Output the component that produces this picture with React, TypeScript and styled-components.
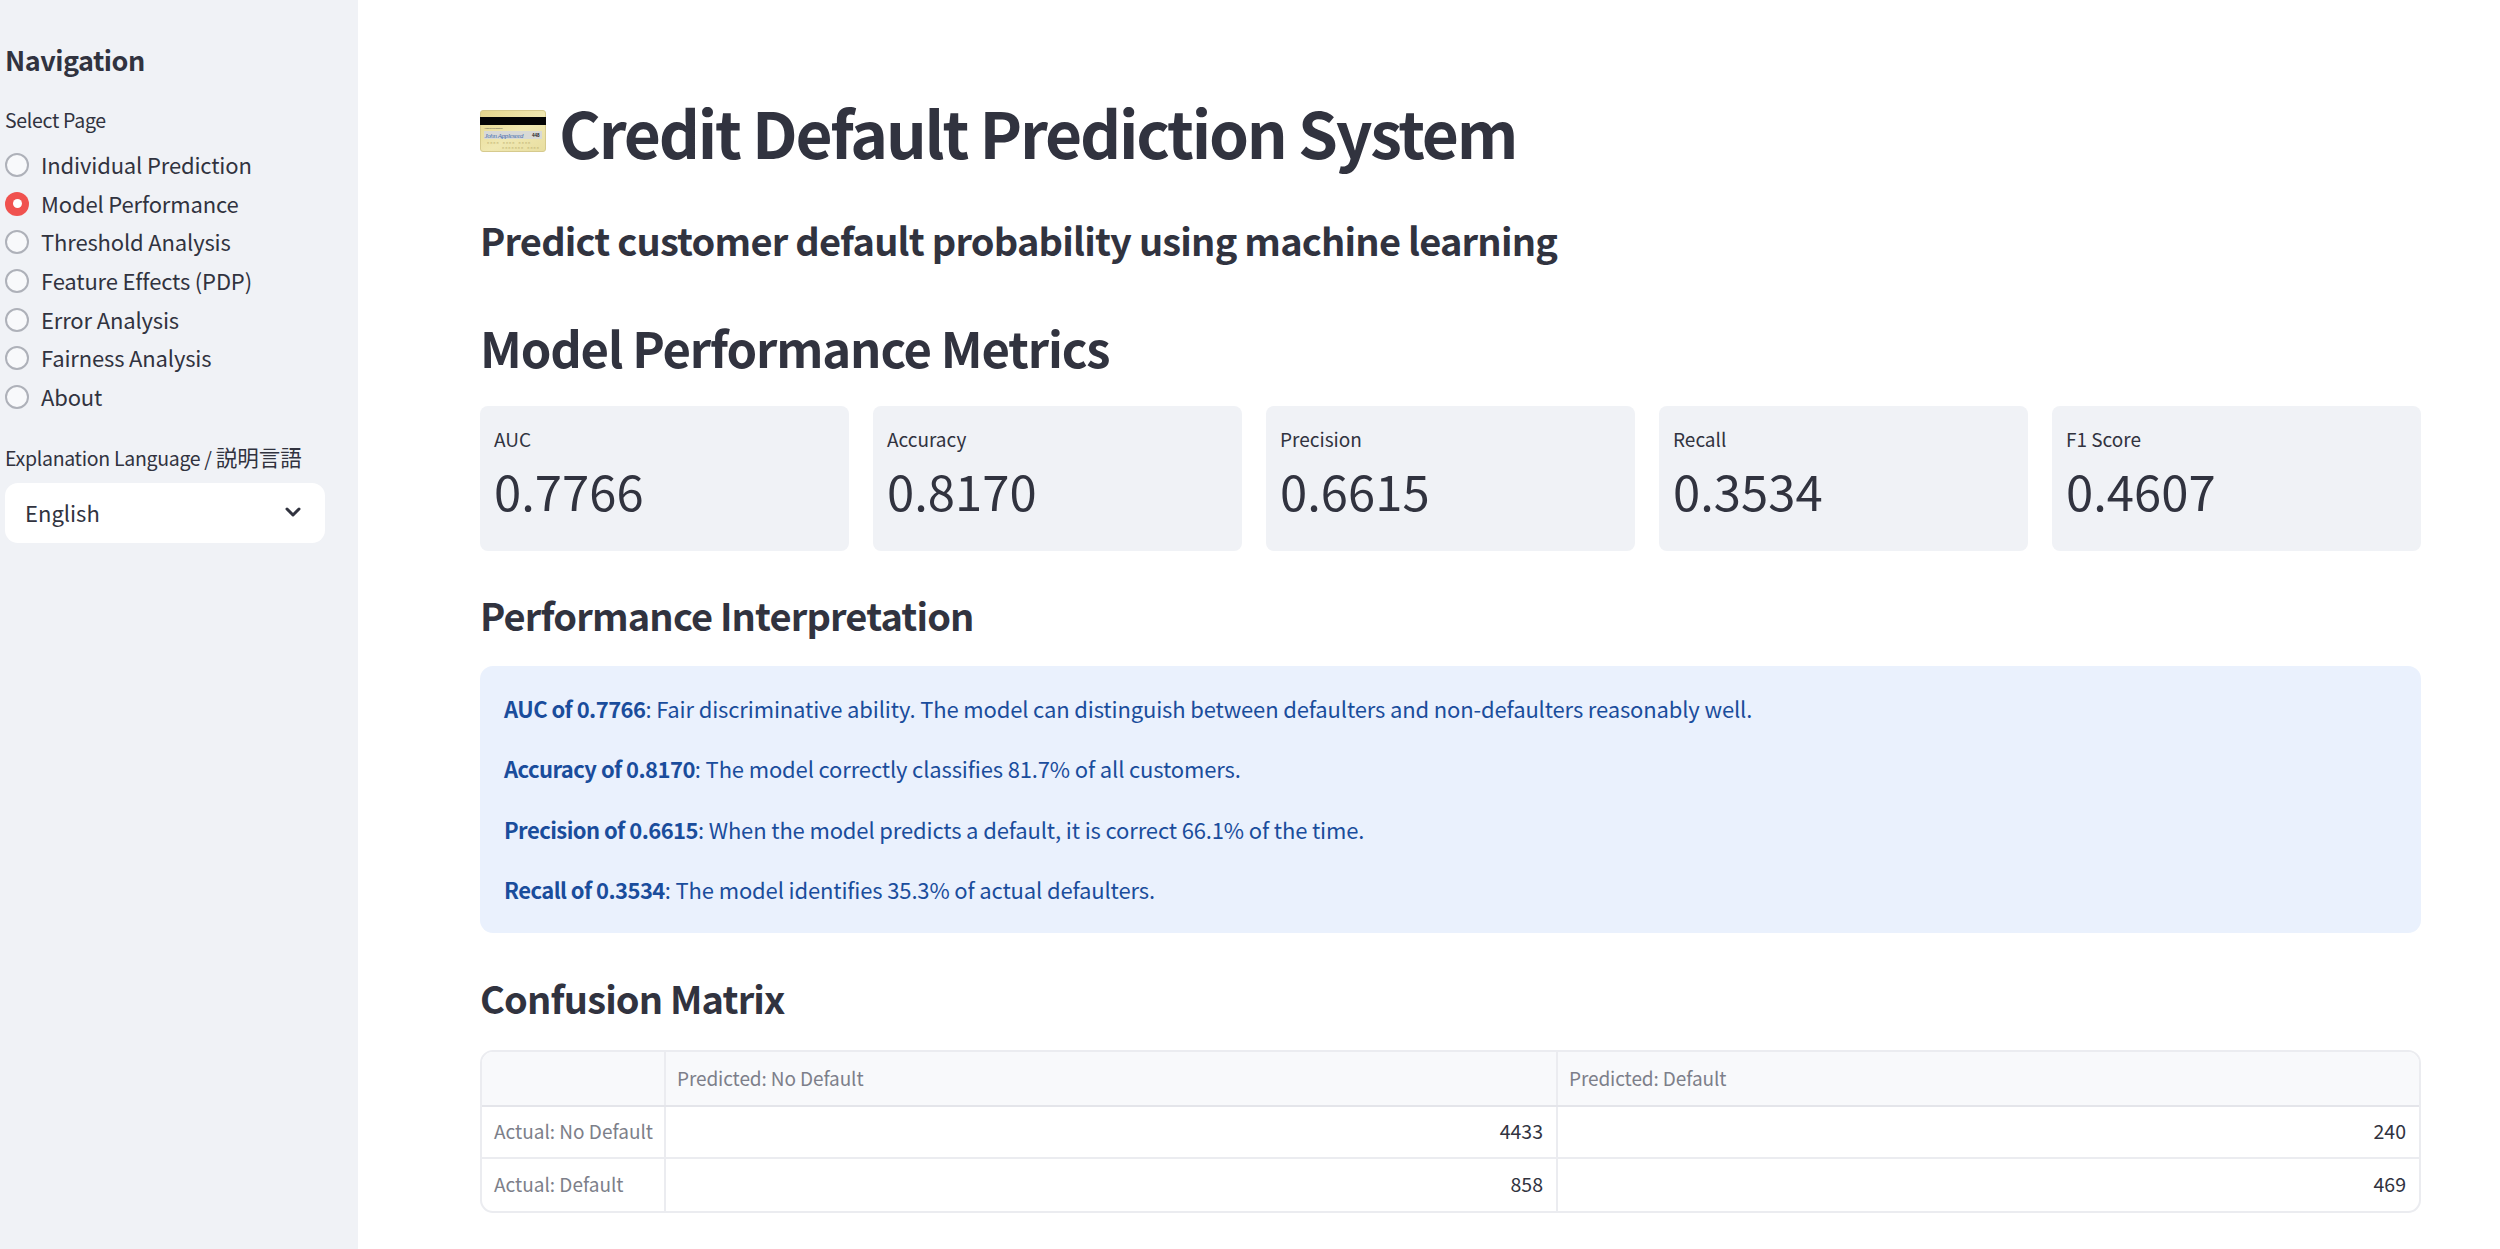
import React from 'react';
import styled, { createGlobalStyle } from 'styled-components';
import { ChevronDown } from 'lucide-react';

const GlobalStyle = createGlobalStyle`
	html, body {
		margin: 0;
		padding: 0;
		background: #ffffff;
		overflow: hidden;
	}

	* {
		box-sizing: border-box;
	}
`;

const FONT = `"Noto Sans CJK JP", "Noto Sans", sans-serif`;

const Page = styled.div`
	display: flex;
	width: 2500px;
	height: 1249px;
	font-family: ${FONT};
	color: #31333f;
	overflow: hidden;
`;

const Sidebar = styled.aside`
	flex: 0 0 358px;
	padding: 42px 33px 0 5px;
	background-color: #f0f2f6;
`;

const NavTitle = styled.h2`
	margin: 0 0 28px;
	font-size: 27px;
	line-height: 36px;
	font-weight: 700;
	letter-spacing: -0.5px;
`;

const FieldLabel = styled.div<{ $gap: number }>`
	font-size: 19.5px;
	line-height: 28px;
	letter-spacing: -0.3px;
	margin-bottom: ${(props) => props.$gap}px;
	white-space: nowrap;
`;

const CjkText = styled.span`
	font-size: 21.5px;
	letter-spacing: 0;
`;

const RadioList = styled.div`
	display: flex;
	flex-direction: column;
	margin-top: 12px;
	margin-bottom: 26.5px;
`;

const RadioRow = styled.label`
	display: flex;
	align-items: center;
	gap: 12px;
	height: 38.6px;
	padding-bottom: 2px;
	font-size: 22px;
	letter-spacing: -0.15px;
`;

const RadioDot = styled.span<{ $checked?: boolean }>`
	display: flex;
	align-items: center;
	justify-content: center;
	width: 24px;
	height: 24px;
	margin-top: 2px;
	border-radius: 50%;
	border: ${(props) => (props.$checked ? 'none' : '2px solid #aeb1b9')};
	background-color: ${(props) => (props.$checked ? '#f0524f' : '#f8f9fb')};

	&::after {
		content: '';
		display: ${(props) => (props.$checked ? 'block' : 'none')};
		width: 9px;
		height: 9px;
		border-radius: 50%;
		background-color: #ffffff;
	}
`;

const SelectBox = styled.div`
	display: flex;
	align-items: center;
	justify-content: space-between;
	height: 60px;
	padding: 0 20px 2px;
	border-radius: 13px;
	background-color: #ffffff;
	font-size: 22px;
`;

const Main = styled.main`
	flex: 1;
	padding: 89px 81px 0 122px;
`;

const TitleRow = styled.div`
	display: flex;
	align-items: center;
	gap: 13px;
	height: 84px;
	margin-bottom: 41px;
`;

const Title = styled.h1`
	margin: 0;
	font-size: 64px;
	line-height: 84px;
	font-weight: 700;
	letter-spacing: -2.2px;
	white-space: nowrap;
`;

const Subtitle = styled.h2`
	margin: 0 0 48.5px;
	font-size: 38px;
	line-height: 52px;
	font-weight: 600;
	letter-spacing: -0.8px;
`;

const SectionTitle = styled.h2`
	margin: 0 0 28px;
	font-size: 49px;
	line-height: 63px;
	font-weight: 600;
	letter-spacing: -1.15px;
`;

const SubSectionTitle = styled.h3<{ $gap: number }>`
	margin: 0 0 ${(props) => props.$gap}px;
	font-size: 38px;
	line-height: 52px;
	font-weight: 600;
	letter-spacing: -0.85px;
`;

const MetricRow = styled.div`
	display: grid;
	grid-template-columns: repeat(5, 1fr);
	gap: 24px;
	margin-bottom: 38.5px;
`;

const MetricCard = styled.div`
	height: 145px;
	padding: 19px 14px 0;
	border-radius: 8px;
	background-color: #f0f2f6;
`;

const MetricLabel = styled.div`
	font-size: 19px;
	line-height: 28px;
`;

const MetricValue = styled.div`
	margin-top: 3.5px;
	font-size: 49px;
	line-height: 68px;
`;

const InfoBox = styled.div`
	display: flex;
	flex-direction: column;
	height: 267px;
	padding: 12px 24px 0;
	margin-bottom: 39.5px;
	border-radius: 13px;
	background-color: #eaf1fd;
	color: #1a4d9c;
`;

const InfoLine = styled.p`
	margin: 0;
	height: 60.6px;
	font-size: 22px;
	line-height: 60px;
	letter-spacing: -0.14px;

	strong {
		letter-spacing: -0.55px;
	}
`;

const TableFrame = styled.div`
	border: 2px solid #ebecf0;
	border-radius: 13px;
	overflow: hidden;
`;

const MatrixTable = styled.table`
	width: 100%;
	table-layout: fixed;
	border-collapse: collapse;
	font-size: 19.5px;
`;

const HeadCell = styled.th<{ $width: number }>`
	width: ${(props) => props.$width}px;
	height: 54px;
	padding: 0 11px 2px;
	background-color: #f8f9fb;
	border-right: 2px solid #ebecf0;
	border-bottom: 2px solid #e4e5ea;
	color: #7d7f8a;
	font-size: 19px;
	font-weight: 400;
	letter-spacing: -0.1px;
	text-align: left;

	&:last-child {
		border-right: none;
	}
`;

const RowHead = styled.td`
	height: 52.5px;
	padding: 0 12px 2px;
	border-right: 2px solid #ebecf0;
	color: #7d7f8a;
	font-size: 19px;
	white-space: nowrap;
`;

const NumCell = styled.td`
	padding: 0 13px 2px;
	border-right: 2px solid #ebecf0;
	text-align: right;

	&:last-child {
		border-right: none;
	}
`;

const BodyRow = styled.tr`
	&:not(:last-child) td {
		border-bottom: 2px solid #ebecf0;
	}
`;

const CardEmoji = () => (
	<svg width="66" height="42" viewBox="0 0 66 42">
		<defs>
			<linearGradient id="cardGold" x1="0" y1="0" x2="1" y2="1">
				<stop offset="0" stopColor="#e6d68c" />
				<stop offset="0.55" stopColor="#f0e8b2" />
				<stop offset="1" stopColor="#e8dea0" />
			</linearGradient>
		</defs>
		<rect x="0.5" y="0.5" width="65" height="41" rx="2.5" fill="url(#cardGold)" stroke="#d6ca8e" />
		<rect x="0" y="7" width="66" height="8" fill="#050505" />
		<rect x="4" y="21" width="58" height="8" fill="#d8d9d6" />
		<text x="4.5" y="27.5" fontSize="7" fontStyle="italic" fill="#4a6fb0" fontFamily="Liberation Serif, serif" textLength="39">
			John Appleseed
		</text>
		<text x="52" y="27" fontSize="4.5" fontWeight="700" fill="#222222" fontFamily="Liberation Sans, sans-serif">
			448
		</text>
		<text x="4" y="19" fontSize="2" fill="#444444" fontFamily="Liberation Sans, sans-serif">
			Authorized Signature
		</text>
		<text x="7" y="33.5" fontSize="3.6" letterSpacing="1" fill="#c4b676" fontFamily="Liberation Mono, monospace">
			0000 0000 0000
		</text>
		<text x="22" y="39" fontSize="3.6" letterSpacing="1" fill="#c4b676" fontFamily="Liberation Mono, monospace">
			0000000 0000
		</text>
	</svg>
);

const PAGES = [
	'Individual Prediction',
	'Model Performance',
	'Threshold Analysis',
	'Feature Effects (PDP)',
	'Error Analysis',
	'Fairness Analysis',
	'About',
];

const METRICS = [
	{ label: 'AUC', value: '0.7766' },
	{ label: 'Accuracy', value: '0.8170' },
	{ label: 'Precision', value: '0.6615' },
	{ label: 'Recall', value: '0.3534' },
	{ label: 'F1 Score', value: '0.4607' },
];

const INSIGHTS = [
	{
		lead: 'AUC of 0.7766',
		text: ': Fair discriminative ability. The model can distinguish between defaulters and non-defaulters reasonably well.',
	},
	{ lead: 'Accuracy of 0.8170', text: ': The model correctly classifies 81.7% of all customers.' },
	{ lead: 'Precision of 0.6615', text: ': When the model predicts a default, it is correct 66.1% of the time.' },
	{ lead: 'Recall of 0.3534', text: ': The model identifies 35.3% of actual defaulters.' },
];

const MATRIX = [
	{ name: 'Actual: No Default', cells: [4433, 240] },
	{ name: 'Actual: Default', cells: [858, 469] },
];

function App() {
	return (
		<Page>
			<GlobalStyle />
			<Sidebar>
				<NavTitle>Navigation</NavTitle>
				<FieldLabel $gap={0}>Select Page</FieldLabel>
				<RadioList>
					{PAGES.map((name) => (
						<RadioRow key={name}>
							<RadioDot $checked={name === 'Model Performance'} />
							{name}
						</RadioRow>
					))}
				</RadioList>
				<FieldLabel $gap={11}>
					Explanation Language / <CjkText>説明言語</CjkText>
				</FieldLabel>
				<SelectBox>
					English
					<ChevronDown size={24} strokeWidth={3} />
				</SelectBox>
			</Sidebar>
			<Main>
				<TitleRow>
					<CardEmoji />
					<Title>Credit Default Prediction System</Title>
				</TitleRow>
				<Subtitle>Predict customer default probability using machine learning</Subtitle>
				<SectionTitle>Model Performance Metrics</SectionTitle>
				<MetricRow>
					{METRICS.map((metric) => (
						<MetricCard key={metric.label}>
							<MetricLabel>{metric.label}</MetricLabel>
							<MetricValue>{metric.value}</MetricValue>
						</MetricCard>
					))}
				</MetricRow>
				<SubSectionTitle $gap={24.5}>Performance Interpretation</SubSectionTitle>
				<InfoBox>
					{INSIGHTS.map((item) => (
						<InfoLine key={item.lead}>
							<strong>{item.lead}</strong>
							{item.text}
						</InfoLine>
					))}
				</InfoBox>
				<SubSectionTitle $gap={25.5}>Confusion Matrix</SubSectionTitle>
				<TableFrame>
					<MatrixTable>
						<thead>
							<tr>
								<HeadCell $width={183} />
								<HeadCell $width={892}>Predicted: No Default</HeadCell>
								<HeadCell $width={862}>Predicted: Default</HeadCell>
							</tr>
						</thead>
						<tbody>
							{MATRIX.map((row) => (
								<BodyRow key={row.name}>
									<RowHead>{row.name}</RowHead>
									{row.cells.map((cell) => (
										<NumCell key={cell}>{cell}</NumCell>
									))}
								</BodyRow>
							))}
						</tbody>
					</MatrixTable>
				</TableFrame>
			</Main>
		</Page>
	);
}

export default App;
